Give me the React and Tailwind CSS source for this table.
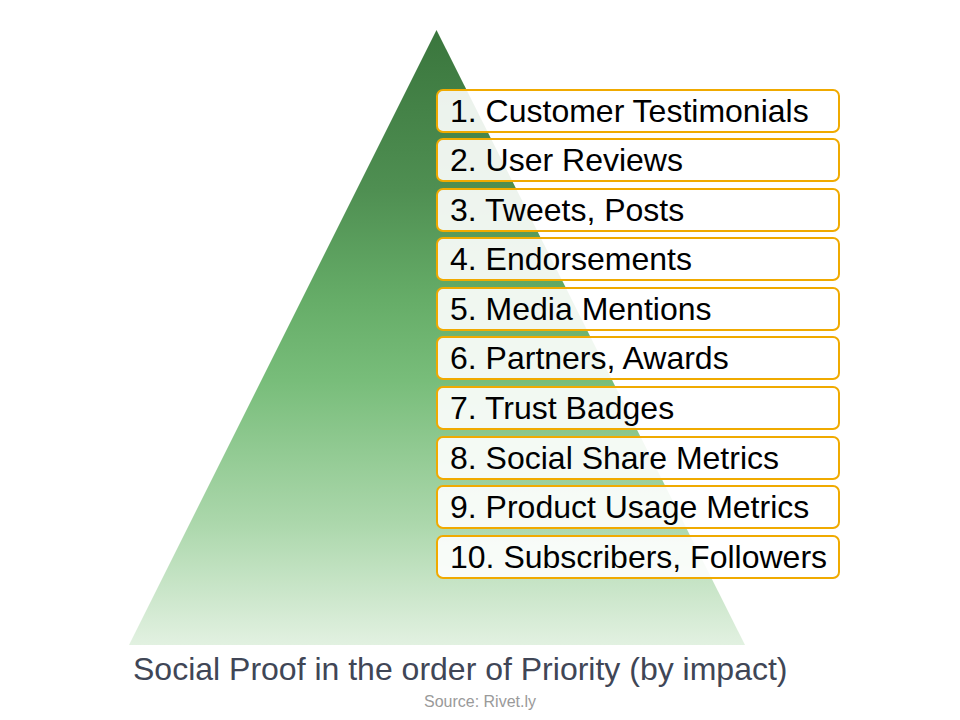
import React from "react";

const items = [
  "1. Customer Testimonials",
  "2. User Reviews",
  "3. Tweets, Posts",
  "4. Endorsements",
  "5. Media Mentions",
  "6. Partners, Awards",
  "7. Trust Badges",
  "8. Social Share Metrics",
  "9. Product Usage Metrics",
  "10. Subscribers, Followers",
];

export default function App() {
  return (
    <div
      className="relative w-[960px] h-[720px] bg-white overflow-hidden"
      style={{ fontFamily: '"Liberation Sans", Arial, sans-serif' }}
    >
      <svg
        className="absolute inset-0"
        width="960"
        height="720"
        viewBox="0 0 960 720"
      >
        <defs>
          <linearGradient id="g" x1="0" y1="30" x2="0" y2="645" gradientUnits="userSpaceOnUse">
            <stop offset="0" stopColor="#3a763d" />
            <stop offset="0.26" stopColor="#4f8f52" />
            <stop offset="0.44" stopColor="#66ad68" />
            <stop offset="0.57" stopColor="#78bd7a" />
            <stop offset="0.8" stopColor="#abd7ab" />
            <stop offset="1" stopColor="#e2f1e1" />
          </linearGradient>
        </defs>
        <polygon points="436.5,30 129,645 745,645" fill="url(#g)" />
      </svg>

      <div className="relative flex flex-col">
        <div className="ml-[436px] mt-[88.5px] flex w-[404px] flex-col gap-[5.6px]">
          {items.map((t) => (
            <div
              key={t}
              className="flex h-[44px] items-center rounded-[7px] border-2 border-[#f0aa00] bg-white/90 pl-[12px] text-[32px] leading-none text-black whitespace-nowrap"
            >
              {t}
            </div>
          ))}
        </div>
        <div className="mt-[72px] pl-[133px] text-[32px] leading-[36px] text-[#404656] whitespace-nowrap">
          Social Proof in the order of Priority (by impact)
        </div>
        <div className="mt-[5px] text-center text-[16px] leading-[20px] text-[#9a9a9a]">
          Source: Rivet.ly
        </div>
      </div>
    </div>
  );
}
